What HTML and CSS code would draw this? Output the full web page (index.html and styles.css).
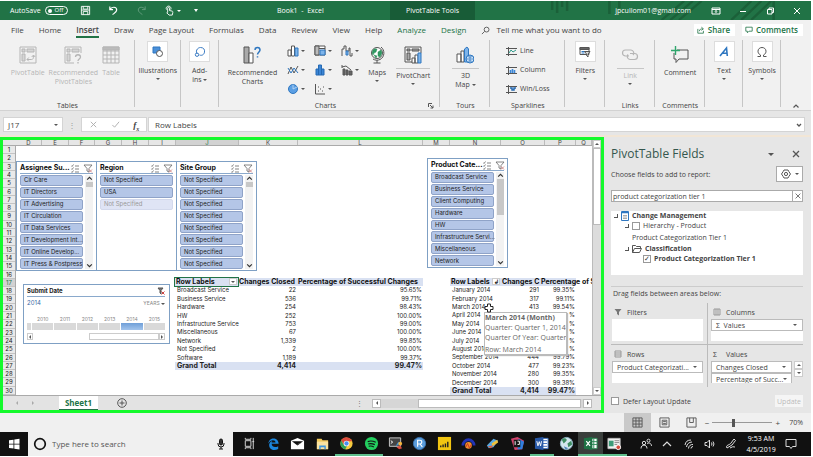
FILE: index.html
```html
<!DOCTYPE html>
<html lang="en">
<head>
<meta charset="utf-8">
<title>Book1 - Excel</title>
<link rel="stylesheet" href="styles.css">
</head>
<body>
<header class="titlebar">
  <div class="quick">
    <label class="autosave" for="autosave">AutoSave</label>
    <button class="toggle" id="autosave"><i></i>Off</button>
    <button class="qa save" aria-label="Save"><svg viewBox="0 0 12 12"><path d="M1.5 1.5h9v9h-9zM3.5 1.5v3h5v-3M3.5 10.500v-3.500h5v3.500M1.500 5.500h9"/></svg></button>
    <button class="qa undo" aria-label="Undo"><svg viewBox="0 0 12 12"><path d="M2 1.500v3.500h3.500M2 5C4 1.500 9.500 1.500 9.500 5.500c0 2-2 3-4.500 5" stroke-width="1.300"/></svg></button>
    <button class="qa redo" aria-label="Redo"><svg viewBox="0 0 12 12"><path d="M10 1.500v3.500h-3.500M10 5C8 1.500 2.500 1.500 2.500 5.500c0 2 2 3 4.500 5"/></svg></button>
    <button class="qa touch" aria-label="Touch mode"><svg viewBox="0 0 12 12"><path d="M4 8V3.500a1 1 0 0 1 2 0V6l3 .7c.7.300.8.800.6 1.500L9 11H5.500L3 8.500zM2.700 5a2.600 2.600 0 1 1 4.600 0"/></svg></button>
    <i class="caret"></i>
    <i class="caret lined"></i>
  </div>
  <div class="doc">Book1&nbsp; -&nbsp; Excel</div>
  <div class="context">PivotTable Tools</div>
  <div class="account">
    <svg class="circuit" viewBox="0 0 270 19" preserveAspectRatio="none"><path d="M62 0v9M66 0v12M70 0v6M74 0v10M108 0v13M116 0v7M150 19l18-19M157 19l18-19M164 19l18-19M206 19l16-19M214 19l16-19M222 19l16-19M240 0v19"/></svg>
    <span class="mail">jpcullom01@gmail.com</span>
    <button class="win" aria-label="Ribbon display"><svg viewBox="0 0 10 10"><path d="M1 2h8v6H1zM1 3.500h8M5 7V4.500M4 5.500l1-1 1 1"/></svg></button>
    <button class="win" aria-label="Minimize"><svg viewBox="0 0 10 10"><path d="M2 5.500h6"/></svg></button>
    <button class="win" aria-label="Restore"><svg viewBox="0 0 10 10"><path d="M2.500 3.500h4.500v4.500H2.500zM4 3.500V2h4.500v4.500H7"/></svg></button>
    <button class="win" aria-label="Close"><svg viewBox="0 0 10 10"><path d="M2 2l6 6M8 2L2 8"/></svg></button>
  </div>
</header>

<nav class="tabs">
  <a href="#">File</a><a href="#">Home</a><a href="#" class="on">Insert</a><a href="#">Draw</a><a href="#">Page Layout</a><a href="#">Formulas</a><a href="#">Data</a><a href="#">Review</a><a href="#">View</a><a href="#">Help</a><a href="#" class="green">Analyze</a><a href="#" class="green">Design</a>
  <a href="#" class="tell"><svg viewBox="0 0 10 10"><path d="M1 9l3-3M3.500 4a2.700 2.700 0 1 1 5.400 0a2.700 2.700 0 0 1-5.400 0"/></svg>Tell me what you want to do</a>
  <span class="share">
    <button><svg viewBox="0 0 10 10"><path d="M1.500 4h-.5v5h7V6M3 6.500C3 4 5 3.500 7 3.500M5.500 1.500l2.500 2-2.500 2"/></svg>Share</button>
    <button><svg viewBox="0 0 10 10"><path d="M1 1.500h8v5H5L3 8.500v-2H1z"/></svg>Comments</button>
  </span>
</nav>

<section class="ribbon">
  <div class="group tables">
    <div class="tools">
      <button class="tool off"><svg class="big" viewBox="0 0 18 18"><path d="M1 1h16v16H1z"/><path d="M3 3h3v3H3zM8 3h7v3H8zM3 8h3v7H3z" fill="#d5d5d5"/><path d="M8 13.500h4.500c1.500 0 2-1 2-4M9.800 11.500L8 13.500l1.800 1.800M12.700 11L14.500 9l1.700 2"/></svg>PivotTable</button>
      <button class="tool off"><svg class="big" viewBox="0 0 18 18"><path d="M10 17H1V1h16v6"/><path d="M3 3h3v3H3zM8 3h7v3H8zM3 8h3v7H3z" fill="#d5d5d5"/><path d="M11.500 11c0-3 5-3 5 0 0 2-2.500 2-2.500 4M14 16v1.500" stroke-width="1.300"/></svg>Recommended<br>PivotTables</button>
      <button class="tool off"><svg class="big" viewBox="0 0 18 18"><path d="M1 1h16v16H1zM1 5h16M1 9h16M1 13h16M5 1v16M9 1v16M13 1v16"/><path d="M1 1h16v3H1z" fill="#bbb"/></svg>Table</button>
    </div>
    <h2>Tables</h2>
  </div>
  <div class="group illus">
    <button class="tool"><span class="tile"><svg viewBox="0 0 12 12"><path d="M1 1h7v6H1z" fill="#4a90d9" stroke="#2f77c0"/><circle cx="7.500" cy="7.500" r="3" fill="#fff"/></svg></span>Illustrations<i class="caret"></i></button>
  </div>
  <div class="group addins">
    <button class="tool"><span class="tile"><svg viewBox="0 0 12 12"><path d="M3.500 8C1 6 3 1.500 6.500 1.500c3 0 4.500 2 4 4.500-.3 2.500-2.500 4-5 3" stroke="#3b7cc4"/><circle cx="3" cy="8.700" r="1.700" stroke="#3b7cc4"/></svg></span>Add-<br><span>ins <i class="caret"></i></span></button>
  </div>
  <div class="group charts">
    <div class="tools">
      <button class="tool rec"><svg class="big" viewBox="0 0 18 18"><path d="M1 1h5v16H1z" fill="#aaa"/><path d="M6 7h4v10H6z" fill="#fff"/><path d="M12 4c0-3.500 5-3.500 5 0 0 2-2.500 2.500-2.500 4.500M14.500 10.200v1.300" stroke="#2f77c0" stroke-width="1.500"/></svg>Recommended<br>Charts</button>
      <div class="kinds">
        <button aria-label="Column chart"><svg viewBox="0 0 12 12"><path d="M1 5h3v6H1z" fill="#fff"/><path d="M4.500 1h3v10h-3z" fill="#fff"/><path d="M8 3h3v8H8z" fill="#7db4ea" stroke="#2f77c0"/></svg><i class="caret"></i></button>
        <button aria-label="Hierarchy chart"><svg viewBox="0 0 12 12"><path d="M1 1h10v9H1zM1 3.500h10" fill="#fff"/><path d="M1 1h4v9H1z" fill="#bbb"/><path d="M6 5h5v5H6z" fill="#7db4ea" stroke="#2f77c0"/></svg><i class="caret"></i></button>
        <button aria-label="Waterfall chart"><svg viewBox="0 0 12 12"><path d="M1 11V4h2V1h2v5h3V3h1v8h2V8" /><path d="M5 6h2v4H5z" fill="#7db4ea" stroke="#2f77c0"/></svg><i class="caret"></i></button>
        <button aria-label="Line chart"><svg viewBox="0 0 12 12"><path d="M1 10l3-7 3 6 4-7"/><path d="M1 4l3 5 3-5 4 5" stroke="#2f77c0"/></svg><i class="caret"></i></button>
        <button aria-label="Statistic chart"><svg viewBox="0 0 12 12"><path d="M2 11V5h2.500V1h3v4H10v6z" fill="#3b86d6" stroke="#2469b3"/><path d="M4.500 11V5M7.500 11V5" stroke="#2469b3"/></svg><i class="caret"></i></button>
        <button aria-label="Combo chart"><svg viewBox="0 0 12 12"><path d="M1 3l4-1 5 4M1 1v3"/><path d="M2 5h2v6H2zM5 6h2v5H5zM8 7h3v4H8z" fill="#666"/></svg><i class="caret"></i></button>
        <button aria-label="Pie chart"><svg viewBox="0 0 12 12"><circle cx="6" cy="6" r="4.500" fill="#5b9fe4" stroke="#2f77c0"/><path d="M6 6V1.500M6 6L10 4" stroke="#cfe4f8" stroke-width=".7"/></svg><i class="caret"></i></button>
        <button aria-label="Scatter chart"><svg viewBox="0 0 12 12"><path d="M1.500 1v10H11"/><path d="M4 8h1M6 6h1M8 8h1M9 4h1M4 4h1"/></svg><i class="caret"></i></button>
      </div>
      <button class="tool maps"><svg class="big" viewBox="0 0 18 18"><circle cx="9" cy="7" r="5.500" fill="#fff"/><path d="M5 4c2-2 3-1 4-1l-1 3-2 1-1 2-1-2zM10 6l3-2 1 3-2 4-2-1zM6 9l3 1-1 2z" fill="#2f9a62" stroke="#2f8a5a" stroke-width=".5"/><path d="M13 1c4 3 4 10-1 12.500-2 1-5 1-7-.5M9 14v3M5.500 17h7"/></svg>Maps<i class="caret"></i></button>
      <button class="tool ruled"><svg class="big" viewBox="0 0 18 18"><path d="M9 16H1V1h16v6"/><path d="M3 3h3v2H3zM8 3h7v2H8zM3 7h3v7H3z" fill="#aaa"/><path d="M8 12h3v5H8zM11 9h3v8h-3z" fill="#fff"/><path d="M14 7h3v10h-3z" fill="#7db4ea" stroke="#2f77c0"/></svg><span>PivotChart</span><i class="caret"></i></button>
    </div>
    <div class="foot"><h2>Charts</h2><svg class="launch" viewBox="0 0 6 6"><path d="M.5 4V.5H4M2 2l3 3M5 2.500V5H2.500"/></svg></div>
  </div>
  <div class="group tours">
    <button class="tool ruled"><svg class="big" viewBox="0 0 18 18"><path d="M1 8h4v8H1zM5 5h3v11H5z" fill="#fff"/><path d="M8.500 3V16h4V3l-1.500-2z" fill="#7db4ea" stroke="#2f77c0"/><circle cx="14" cy="13" r="4" fill="#cfe4f8" stroke="#2f77c0"/><path d="M10 13h8M14 9v8M11.500 10.500q2.500 1.500 5 0M11.500 15.500q2.500-1.500 5 0" stroke="#2f77c0" stroke-width=".7"/></svg><span>3D</span><span>Map <i class="caret"></i></span></button>
    <h2>Tours</h2>
  </div>
  <div class="group sparks">
    <div class="lines">
      <button><svg viewBox="0 0 11 9"><path d="M2.500 0v9M0 1.500h11M0 7.500h11"/><path d="M3 6l2-3 2 2 3-2" stroke="#2f9a8a"/></svg>Line</button>
      <button><svg viewBox="0 0 11 9"><path d="M2.500 0v9M0 1.500h11M0 7.500h11"/><path d="M4.500 7V4M6.500 7V3M8.500 7V4" stroke="#3b86d6" stroke-width="1.600"/></svg>Column</button>
      <button><svg viewBox="0 0 11 9"><path d="M2.500 0v9M0 1.500h11M0 7.500h11"/><path d="M4 3h2v2h2V3h2" stroke="#2469b3" stroke-width="1.500"/></svg>Win/Loss</button>
    </div>
    <h2>Sparklines</h2>
  </div>
  <div class="group filters">
    <button class="tool"><span class="tile"><svg viewBox="0 0 12 12"><path d="M1 1.500h9v7H1z" fill="#fff"/><path d="M1 1.500h9v2H1z" fill="#666"/><path d="M2.500 5.500h4M2.500 7h3" stroke="#2f77c0"/><path d="M5.500 5.500H11L9 8v3L7.500 9.500V8z" fill="#ddd"/></svg></span>Filters<i class="caret"></i></button>
  </div>
  <div class="group links">
    <button class="tool off ruled"><svg class="big" viewBox="0 0 18 18"><path d="M8 10H4.500a3 3 0 0 1 0-6H10a3 3 0 0 1 2 5M9 7.500H13.500a3 3 0 0 1 0 6H9A3 3 0 0 1 7 8.500" stroke-width="1.200"/></svg><span>Link</span><i class="caret"></i></button>
    <h2>Links</h2>
  </div>
  <div class="group comm">
    <button class="tool"><svg class="big" viewBox="0 0 18 18"><path d="M6 4h11v9H8l-3 3.500V13H3V7"/><path d="M4.500 0v9M0 4.500h9" stroke="#2fa76d" stroke-width="1.400"/></svg>Comment</button>
    <h2>Comments</h2>
  </div>
  <div class="group text">
    <button class="tool"><span class="tile"><svg viewBox="0 0 12 12"><path d="M2 10L8.500 2l.8 8M4.500 7.200h4.500" stroke="#2f77c0" stroke-width="1.600"/></svg></span>Text<i class="caret"></i></button>
  </div>
  <div class="group text">
    <button class="tool"><span class="tile"><svg viewBox="0 0 12 12"><path d="M1.500 10.500H4.500V9C2.500 8 2 6.500 2 5.200 2 3 3.800 1.500 6 1.500s4 1.500 4 3.700c0 1.300-.5 2.800-2.500 3.800v1.500h3" /></svg></span>Symbols<i class="caret"></i></button>
  </div>
  <div class="group end"><svg viewBox="0 0 8 8"><path d="M1.500 5.500L4 3l2.500 2.500" stroke-width="1.200"/></svg></div>
</section>

<section class="formula">
  <button class="name">J17<i class="caret"></i></button>
  <span class="dots">⋮</span>
  <div class="fx">
    <svg viewBox="0 0 10 10"><path d="M2 2l6 6M8 2L2 8"/></svg>
    <svg viewBox="0 0 10 10"><path d="M1.500 5.500L4 8l5-6"/></svg>
    <em>f<sub>x</sub></em>
  </div>
  <div class="entry"><input aria-label="Formula" value="Row Labels"><svg viewBox="0 0 8 8"><path d="M2 3l2 2 2-2" stroke-width="1.300"/></svg></div>
</section>

<main class="work">
  <section class="book">
    <div class="sheet">
      <i class="corner"></i>
      <div class="cols"><b>D</b><b>E</b><b>F</b><b>G</b><b>H</b><b>I</b><b class="cur">J</b><b>K</b><b>L</b><b>M</b><b>N</b><b>O</b><b>P</b><b>Q</b></div>
      <div class="rows"><b>1</b><b>2</b><b>3</b><b>4</b><b>5</b><b>6</b><b>7</b><b>8</b><b>9</b><b>10</b><b>11</b><b>12</b><b>13</b><b>14</b><b>15</b><b>16</b><b class="cur">17</b><b>18</b><b>19</b><b>20</b><b>21</b><b>22</b><b>23</b><b>24</b><b>25</b><b>26</b><b>27</b><b>28</b><b>29</b><b>30</b></div>
      <div class="canvas">
        <div class="upper">
          <div class="trio">
            <section class="slicer">
              <h3><span>Assignee Su...</span><svg viewBox="0 0 22 9"><use href="#slicer-tools"/></svg></h3>
              <div class="pick"><div class="items"><button>Cir Care</button><button>IT Directors</button><button>IT Advertising</button><button>IT Circulation</button><button>IT Data Services</button><button>IT Development Int...</button><button>IT Online Develop...</button><button>IT Press &amp; Postpress</button></div><div class="bar"><svg viewBox="0 0 6 6"><path d="M1 4l2-2 2 2"/></svg><i class="short"></i><svg viewBox="0 0 6 6"><path d="M1 2l2 2 2-2"/></svg></div></div>
            </section>
            <section class="slicer">
              <h3><span>Region</span><svg viewBox="0 0 22 9"><use href="#slicer-tools"/></svg></h3>
              <div class="pick"><div class="items"><button>Not Specified</button><button>USA</button><button class="faded">Not Specified</button></div></div>
            </section>
            <section class="slicer">
              <h3><span>Site Group</span><svg viewBox="0 0 22 9"><use href="#slicer-tools"/></svg></h3>
              <div class="pick"><div class="items"><button>Not Specified</button><button>Not Specified</button><button>Not Specified</button><button>Not Specified</button><button>Not Specified</button><button>Not Specified</button><button>Not Specified</button><button>Not Specified</button></div><div class="bar"><svg viewBox="0 0 6 6"><path d="M1 4l2-2 2 2"/></svg><i class="short"></i><svg viewBox="0 0 6 6"><path d="M1 2l2 2 2-2"/></svg></div></div>
            </section>
          </div>
          <section class="slicer product">
            <h3><span>Product Cate...</span><svg viewBox="0 0 22 9"><g id="slicer-tools"><path d="M0 1.500l1 1L2.500.5M0 4.500l1 1 1.500-2M0 7.500l1 1 1.500-2M4 2h4M4 5h4M4 8h4"/><path d="M13 1h8l-3 3.500V8l-2-1V4.500z"/><path d="M18 5.500l3 3M21 5.500l-3 3" stroke="#c77"/></g></svg></h3>
            <div class="pick"><div class="items"><button>Broadcast Service</button><button>Business Service</button><button>Client Computing</button><button>Hardware</button><button>HW</button><button>Infrastructure Servi...</button><button>Miscellaneous</button><button>Network</button></div><div class="bar"><svg viewBox="0 0 6 6"><path d="M1 4l2-2 2 2"/></svg><i class="long"></i><svg viewBox="0 0 6 6"><path d="M1 2l2 2 2-2"/></svg></div></div>
          </section>
        </div>
        <div class="lower">
          <section class="timeline">
            <h3>Submit Date<svg viewBox="0 0 8 8"><path d="M1 1h5L4 3.500V7L3 6V3.500z" fill="#777"/><path d="M4.500 4.500l3 3M7.500 4.500l-3 3" stroke="#c44"/></svg></h3>
            <p><span>2014</span><small>YEARS <i class="caret"></i></small></p>
            <div class="years"><span></span><span>2010</span><span>2011</span><span>2012</span><span>2013</span><span class="sel">2014</span><span>2015</span></div>
            <div class="scroll"><button aria-label="Earlier"><i class="left"></i></button><i class="thumb"></i><button aria-label="Later"><i class="right"></i></button></div>
          </section>
          <table class="pivot one">
            <colgroup><col class="w63"><col class="w59"><col></colgroup>
            <thead><tr><th class="active">Row Labels<button aria-label="Filter rows"><i class="caret"></i></button></th><th>Changes Closed</th><th>Percentage of Successful Changes</th></tr></thead>
            <tbody>
            <tr><td>Broadcast Service</td><td>22</td><td>95.65%</td></tr>
            <tr><td>Business Service</td><td>536</td><td>99.71%</td></tr>
            <tr><td>Hardware</td><td>254</td><td>98.43%</td></tr>
            <tr><td>HW</td><td>252</td><td>100.00%</td></tr>
            <tr><td>Infrastructure Service</td><td>753</td><td>99.00%</td></tr>
            <tr><td>Miscellaneous</td><td>67</td><td>100.00%</td></tr>
            <tr><td>Network</td><td>1,339</td><td>99.85%</td></tr>
            <tr><td>Not Specified</td><td>2</td><td>100.00%</td></tr>
            <tr><td>Software</td><td>1,189</td><td>99.37%</td></tr>
            </tbody>
            <tfoot><tr><td>Grand Total</td><td>4,414</td><td>99.47%</td></tr></tfoot>
          </table>
          <div class="months">
          <table class="pivot two">
            <colgroup><col class="w51"><col class="w39"><col></colgroup>
            <thead><tr><th>Row Labels<button aria-label="Filter months"><i class="sorted">↲</i></button></th><th>Changes C</th><th>Percentage of S</th></tr></thead>
            <tbody>
            <tr><td>January 2014</td><td>291</td><td>99.35%</td></tr>
            <tr><td>February 2014</td><td>317</td><td>99.11%</td></tr>
            <tr><td>March 2014</td><td>413</td><td>99.54%</td></tr>
            <tr><td>April 2014</td><td></td><td>%</td></tr>
            <tr><td>May 2014</td><td></td><td>%</td></tr>
            <tr><td>June 2014</td><td></td><td>%</td></tr>
            <tr><td>July 2014</td><td></td><td>%</td></tr>
            <tr><td>August 2014</td><td></td><td>%</td></tr>
            <tr><td>September 2014</td><td>444</td><td>99.79%</td></tr>
            <tr><td>October 2014</td><td>477</td><td>99.23%</td></tr>
            <tr><td>November 2014</td><td>280</td><td>99.35%</td></tr>
            <tr><td>December 2014</td><td>300</td><td>99.38%</td></tr>
            </tbody>
            <tfoot><tr><td>Grand Total</td><td>4,414</td><td>99.47%</td></tr></tfoot>
          </table>
          <div class="tip"><b>March 2014 (Month)</b><span>Quarter: Quarter 1, 2014</span><span>Quarter Of Year: Quarter 1</span><span class="last">Row: March 2014</span></div>
          <svg class="cross" viewBox="0 0 10 10"><path d="M3.500 1h3v2.500H9v3H6.500V9h-3V6.500H1v-3h2.500z" fill="#fff" stroke="#222"/></svg>
          </div>
        </div>
      </div>
      <div class="vbar"><i class="cell"><i class="up"></i></i><i class="thumb"></i><i class="cell low"><i class="down"></i></i></div>
    </div>
    <div class="sheets">
      <span class="arrows"><i class="left"></i><i class="right"></i></span>
      <button class="tab">Sheet1</button>
      <button class="add" aria-label="New sheet"><svg viewBox="0 0 10 10"><circle cx="5" cy="5" r="4.300"/><path d="M5 2.500v5M2.500 5h5"/></svg></button>
      <span class="dots">⋮</span>
      <div class="hbar"><button aria-label="Scroll left"><i class="left"></i></button><i class="thumb"></i><button aria-label="Scroll right"><i class="right"></i></button></div>
    </div>
  </section>

  <aside class="pane">
    <div class="head"><h1>PivotTable Fields</h1><i class="caret"></i><svg viewBox="0 0 10 10"><path d="M2 2l6 6M8 2L2 8" stroke-width="1.300"/></svg></div>
    <div class="choose"><span>Choose fields to add to report:</span><button aria-label="Tools"><svg viewBox="0 0 10 10"><path d="M3 1h4l.8 1.500L9.500 5 7.800 7.500 7 9H3l-.8-1.500L.5 5l1.700-2.500z"/><circle cx="5" cy="5" r="1.600"/></svg><i class="caret"></i></button></div>
    <div class="find"><input aria-label="Search fields" value="product categorization tier 1"><button aria-label="Clear"><svg viewBox="0 0 10 10"><path d="M2 2l6 6M8 2L2 8"/></svg></button></div>
    <div class="tree">
      <div class="l0 strong"><i class="fold"></i><svg viewBox="0 0 8 10"><path d="M.5.5h7v9h-7z" fill="#fff" stroke="#2f77c0"/><path d="M1 1.500h6" stroke="#2f77c0" stroke-width="1.500"/><path d="M2 4.500h4M2 6h4M2 7.500h4" stroke="#888" stroke-width=".7"/></svg>Change Management</div>
      <div class="l1"><i class="fold"></i><input type="checkbox" id="hier"><label for="hier">Hierarchy - Product</label></div>
      <div class="l2">Product Categorization Tier 1</div>
      <div class="l1 strong"><i class="fold"></i><svg class="folder" viewBox="0 0 10 8"><path d="M.5 7.500v-7h3l1 1h4v2M.5 7.500l2-4h7l-2 4z" fill="#fff"/></svg>Classification</div>
      <div class="l3 strong"><input type="checkbox" id="tier" checked><label for="tier">Product Categorization Tier 1</label></div>
    </div>
    <p class="drag">Drag fields between areas below:</p>
    <div class="areas">
      <section><h4><svg viewBox="0 0 8 8"><path d="M.5 1h7L5 4v3.500L3 6V4z" fill="#777" stroke="none"/></svg>Filters</h4><div class="drop"></div></section>
      <section><h4><svg viewBox="0 0 8 8"><path d="M1 1h6v6H1zM3 1v6M5 1v6" stroke="#999"/></svg>Columns</h4><div class="drop"><button><span>Σ&nbsp; Values</span><i class="caret"></i></button></div></section>
      <section><h4><svg viewBox="0 0 8 8"><path d="M1 1h6v6H1zM1 3h6M1 5h6" stroke="#999"/></svg>Rows</h4><div class="drop"><button><span>Product Categorizati...</span><i class="caret"></i></button></div></section>
      <section><h4><b>Σ</b>Values</h4><div class="vals"><div class="drop"><button><span>Changes Closed</span><i class="caret"></i></button><button><span>Percentage of Succ...</span><i class="caret"></i></button></div><div class="step"><i class="cell"><i class="up"></i></i><i class="cell"><i class="down"></i></i></div></div></section>
    </div>
    <div class="defer"><input type="checkbox" id="defer"><label for="defer">Defer Layout Update</label><button>Update</button></div>
  </aside>
</main>

<footer class="status">
  <button class="view on" aria-label="Normal"><svg viewBox="0 0 12 12"><path d="M1 1h10v10H1zM1 4.300h10M1 7.700h10M4.300 1v10M7.700 1v10"/></svg></button>
  <button class="view" aria-label="Page layout"><svg viewBox="0 0 12 12"><path d="M1 1h10v10H1zM3.500 3.500h5v5h-5zM4.500 5h3M4.500 7h3"/></svg></button>
  <button class="view" aria-label="Page breaks"><svg viewBox="0 0 12 12"><path d="M1 1h10v10H1zM4 1v5M8 1v5M4 6h4"/></svg></button>
  <span>−</span><input type="range" aria-label="Zoom" min="0" max="100" value="34"><span>+</span><span class="pct">70%</span>
</footer>

<footer class="taskbar">
  <button class="start" aria-label="Start"><svg viewBox="0 0 12 12"><path d="M1 2.300L5.500 1.700V5.700H1zM6.300 1.600L11.500.8V5.700H6.300zM1 6.500h4.500v4L1 9.900zM6.300 6.500h5.200v5L6.300 10.700z" fill="#fff" stroke="none"/></svg></button>
  <div class="cortana"><svg viewBox="0 0 14 14"><circle cx="7" cy="7" r="5.300" stroke-width="1.700"/></svg><input aria-label="Search" placeholder="Type here to search"><svg class="mic" viewBox="0 0 8 12"><rect x="2.500" y="1" width="3" height="6" rx="1.500" fill="#333"/><path d="M1 5v1a3 3 0 0 0 6 0V5M4 9v2M2 11h4"/></svg></div>
  <div class="apps">
    <a href="#" aria-label="Task view"><svg viewBox="0 0 16 16"><path d="M3.500 5h6v6h-6zM3.500 2v1.500h6V2M3.500 14v-1.500h6V14M12 2v12M11 6h2" stroke="#ddd"/></svg></a>
    <a href="#" aria-label="Edge"><svg viewBox="0 0 16 16"><path d="M2.500 8C3 1 13 .5 13.500 8.300H6c.2 4 4.500 4.200 7 2.500v3C8 16.500 2.500 14 3.500 8.500 4 6.500 6 5.500 6.800 5.300 6.200 6 6 6.500 6 6.800h4.200C10 4 5 3.500 2.500 8z" fill="#1b86dd" stroke="none"/></svg></a>
    <a href="#" aria-label="Mail"><svg viewBox="0 0 16 16"><path d="M1 5l7-3 7 3v9H1z" fill="#fff" stroke="none"/><path d="M2 5.500h12L8 10z" fill="#111" stroke="none"/><path d="M8 9l3-1.500"/></svg></a>
    <a href="#" aria-label="Files"><svg viewBox="0 0 16 16"><path d="M2 3h5l1 1.500h6V14H2z" fill="#f3c95b" stroke="none"/><path d="M2 6h12v8H2z" fill="#fbe3a0" stroke="none"/><path d="M4.500 14v-4h7v4H10v-2H6v2z" fill="#3f96dd" stroke="none"/></svg></a>
    <a href="#" class="run" aria-label="Chrome"><svg viewBox="0 0 16 16"><g stroke="none"><circle cx="8" cy="8" r="6.500" fill="#f7ca3e"/><path d="M2.300 4.800A6.500 6.500 0 0 1 14 5.500H8L5 9z" fill="#dd4b3e"/><path d="M2.300 4.800L5.500 10l3 1-2 3.300A6.500 6.500 0 0 1 2.300 4.800z" fill="#2da05a"/><circle cx="8" cy="8" r="3" fill="#fff"/><circle cx="8" cy="8" r="2.300" fill="#4a8df0"/></g></svg></a>
    <a href="#" class="run" aria-label="Spotify"><svg viewBox="0 0 16 16"><circle cx="8" cy="8" r="7" fill="#23cf5f" stroke="none"/><path d="M4 6q4-1.500 8.500.7M4.500 8.500q3.500-1 7 .7M5 11q3-.8 5.500.7" stroke="#111" stroke-width="1.200"/></svg></a>
    <a href="#" aria-label="Terminal"><svg viewBox="0 0 16 16"><path d="M1.500 2h12v9h-12z" fill="#444" stroke="#ccc"/><path d="M3 5l2 1.500L3 8" stroke="#fff"/><path d="M8 11l3-5 2 2z" fill="#3f96dd" stroke="none"/><circle cx="13" cy="8" r="2" fill="#f3b33b" stroke="none"/><path d="M9 12l4-2 2 3-3 1z" fill="#dd4b3e" stroke="none"/></svg></a>
    <a href="#" aria-label="RStudio"><svg viewBox="0 0 16 16"><circle cx="8" cy="8" r="6.500" fill="#5b9ddb" stroke="#3a74b4"/><path d="M6 11.500v-7h2.500a2 2 0 0 1 0 4H6M8.500 8.500l2.500 3" stroke="#fff" stroke-width="1.200"/></svg></a>
    <a href="#" aria-label="Power BI"><svg viewBox="0 0 16 16"><path d="M1 1h14v14H1z" fill="#f2c511" stroke="none"/><path d="M4 12v-2M6.500 12V9M9 12V8M11.500 12V6" stroke="#222" stroke-width="1.500"/></svg></a>
    <a href="#" aria-label="Audio"><svg viewBox="0 0 16 16"><path d="M2 10a6 6 0 1 1 12 0" stroke="#2233b5" stroke-width="3"/><circle cx="8" cy="10" r="3.500" fill="#f0922b" stroke="none"/><path d="M5 12l2-4 2 5 2-4" stroke="#ce3327"/></svg></a>
    <a href="#" aria-label="Paint"><svg viewBox="0 0 16 16"><path d="M2 10L9 3l5 2-5 7-5 1z" fill="#5aa8df" stroke="none"/><path d="M7 8l6-4 1 3-6 4z" fill="#f0c23b" stroke="none"/><path d="M3 11l6-1-3 3z" fill="#e05b3c" stroke="none"/></svg></a>
    <a href="#" aria-label="IntelliJ"><svg viewBox="0 0 16 16"><path d="M1 3l7-2 7 4-2 9-8 1z" fill="#d2436c" stroke="none"/><path d="M9 3l6 3-2 8H8z" fill="#2f7fe0" stroke="none"/><path d="M4 4h7v8H4z" fill="#151515" stroke="none"/><path d="M5.500 5.500v4M8 5.500h2v3.500H8" stroke="#fff"/></svg></a>
    <a href="#" class="run" aria-label="Word"><svg viewBox="0 0 16 16"><path d="M7 2.500h8v11H7z" fill="#fff" stroke="#3b6fc0"/><path d="M9 5h5M9 8h5M9 11h5" stroke="#3b6fc0"/><path d="M1 2.500L10 1v14l-9-1.500z" fill="#2858a6" stroke="none"/><path d="M3 5.500l1.200 5L5.600 6 7 10.500l1-5" stroke="#fff"/></svg></a>
    <a href="#" aria-label="Globe"><svg viewBox="0 0 16 16"><circle cx="8" cy="8" r="6.500" fill="#d3e6ef" stroke="#8fb9c9"/><path d="M3 4c3-3 6-1 5 1L5 8zM9 8l4-3 1 4-4 3z" fill="#3d8d63" stroke="none"/><path d="M5 11l5 2-3 1z" fill="#4a7fb9" stroke="none"/></svg></a>
    <a href="#" class="run focus" aria-label="Excel"><svg viewBox="0 0 16 16"><path d="M8 2.500h7v11H8z" fill="#fff" stroke="#2b8a55"/><path d="M11.500 3v10M9 6h6M9 9h6" stroke="#2b8a55"/><path d="M1 2.500L10 1v14l-9-1.500z" fill="#1f7245" stroke="none"/><path d="M3.500 5.500l4 5M7.500 5.500l-4 5" stroke="#fff" stroke-width="1.300"/></svg></a>
    <a href="#" class="run" aria-label="Recorder"><svg viewBox="0 0 16 16"><path d="M1 2.500h13v11H1z" fill="#f2f2f2" stroke="#bbb"/><path d="M2 5h5v6H2z" fill="#3c9b78" stroke="none"/><path d="M8 5h5M8 7h5M8 9h3" stroke="#888"/><circle cx="12" cy="12" r="2.500" fill="#d64b3c" stroke="#fff"/></svg></a>
  </div>
  <div class="tray">
    <svg viewBox="0 0 12 12"><circle cx="4" cy="5" r="1.700"/><path d="M1 10.500c0-4.500 6-4.500 6 0"/><circle cx="8.500" cy="2.700" r="1.500"/><path d="M7 6c2-2 4.500-.5 4.500 2"/></svg>
    <svg viewBox="0 0 12 12"><path d="M2 8l4-4 4 4" stroke-width="1.200"/></svg>
    <svg viewBox="0 0 12 12"><path d="M2 7a6 6 0 0 1 6-5M3.500 9A5.500 5.500 0 0 1 9 4M5.500 10.500A4 4 0 0 1 10 6.500M8 10.500a2 2 0 0 1 2-2"/></svg>
    <svg viewBox="0 0 12 12"><path d="M1 4.500h2L5.500 2v8L3 7.500H1zM7.500 4.500q1 1.500 0 3M9 3.500q2 2.500 0 5"/></svg>
    <svg viewBox="0 0 12 12"><path d="M2 10c-2-3 3-3 4-5l3-4 1.500 1.500L7 7zM5 10q3-2 5-1"/></svg>
    <time><span>9:53 AM</span><span>4/5/2019</span></time>
    <svg viewBox="0 0 12 12"><path d="M1 1.500h10v7H7.500L6 10.500 4.500 8.500H1z"/></svg>
  </div>
</footer>
</body>
</html>
```
FILE: styles.css
```css
:root {
  --ui: "Open Sans", "Noto Sans", sans-serif;
  --cell: Inter, "Liberation Sans", sans-serif;
  --green: #217346;
  --line: #c6c6c6;
}
* { box-sizing: border-box; }
body {
  margin: 0;
  padding: 1px 2px 1px 0;
  min-height: 100vh;
  display: flex;
  flex-direction: column;
  font: 7px/9px var(--ui);
  color: #444;
  background: #fff;
}
button, input { font: inherit; color: inherit; border: 0; padding: 0; margin: 0; background: none; }
button { white-space: nowrap; }
a { color: inherit; text-decoration: none; }
h1, h2, h3, h4, p { margin: 0; font: inherit; }
i { font-style: normal; }
svg { display: block; fill: none; stroke: #555; stroke-width: 1; flex: none; }
input[type="checkbox"] { appearance: none; width: 8px; height: 8px; border: 1px solid #999; background: #fff; flex: none; display: grid; place-items: center; }
input[type="checkbox"]:checked::before { content: "✓"; font: 7px/6px "DejaVu Sans", sans-serif; color: #333; }
.caret, .up, .down, .left, .right { display: inline-block; border: 2px solid transparent; flex: none; }
.caret, .down { border-top-color: #555; border-bottom: 0; vertical-align: middle; }
.up { border-bottom-color: #555; border-top: 0; }
.left { border-right-color: #555; border-left: 0; }
.right { border-left-color: #555; border-right: 0; }

.titlebar { display: flex; height: 19px; align-items: center; background: var(--green); color: #fff; }
.quick { display: flex; align-items: center; width: 277px; padding-left: 10px; }
.quick svg { width: 11px; height: 11px; stroke: #fff; }
.quick .caret { border-top-color: #fff; }
.toggle { display: flex; align-items: center; gap: 3px; margin: 0 12px 0 4px; width: 23px; height: 9px; border: 1px solid #fff; border-radius: 5px; font-size: 6px; line-height: 7px; padding-left: 2px; }
.toggle i { width: 4px; height: 4px; border-radius: 50%; background: #fff; }
.qa { margin-right: 17px; }
.quick .touch { margin-right: 2px; }
.redo { opacity: .3; }
.quick .lined { margin-left: 13px; border-top-width: 3px; }
.doc { width: 113px; }
.context { width: 85px; align-self: stretch; display: flex; align-items: center; justify-content: center; background: #185c37; }
.account { flex: 1; align-self: stretch; display: flex; align-items: center; justify-content: flex-end; position: relative; padding-right: 1px; }
.circuit { position: absolute; inset: 0; width: 100%; height: 100%; stroke: #1b6039; stroke-width: 2; }
.account > :not(.circuit) { position: relative; }
.mail { margin-right: 11px; }
.win { width: 27px; display: grid; place-items: center; }
.win svg { width: 10px; height: 10px; stroke: #fff; }

.tabs { display: flex; align-items: center; gap: 15px; height: 20px; padding: 0 8px 0 11px; background: #f1f1f1; font-size: 8px; line-height: 12px; }
.tabs > a { border-bottom: 2px solid transparent; padding-top: 2px; white-space: nowrap; }
.tabs .on { border-color: var(--green); font-weight: 600; }
.tabs .green { color: var(--green); }
.tabs .tell { display: flex; align-items: center; gap: 6px; }
.tabs svg { width: 9px; height: 9px; }
.share { margin-left: auto; display: flex; gap: 7px; color: var(--green); font-weight: 600; }
.share button { display: flex; gap: 3px; align-items: center; background: #fff; height: 12px; padding: 0 5px 0 3px; }
.share svg { stroke: var(--green); width: 8px; height: 8px; }

.ribbon { display: flex; height: 71px; background: #f1f1f1; border-bottom: 1px solid #d2d2d2; }
.group { display: flex; flex-direction: column; align-items: center; padding-top: 6px; position: relative; flex: 38 38 0; min-width: 0; }
.group::after { content: ""; position: absolute; right: 0; top: 0; bottom: 3px; border-right: 1px solid var(--line); }
.group h2 { margin-top: auto; text-align: center; }
.tables { flex-grow: 135; }
.illus { flex-grow: 46; }
.charts { flex-grow: 222; align-items: stretch; }
.tours, .links, .comm { flex-grow: 50; }
.sparks { flex-grow: 75; }
.filters { flex-grow: 40; }
.end { flex-grow: 30; justify-content: flex-end; }
.end::after { display: none; }
.end svg { width: 8px; height: 8px; }
.tools { display: flex; justify-content: center; align-items: flex-start; gap: 4px; }
.tables .tools { padding-right: 4px; }
.tool { display: flex; flex-direction: column; align-items: center; text-align: center; line-height: 9px; }
.tool > .caret { margin-top: 3px; }
.tool .big { width: 18px; height: 18px; margin-bottom: 4px; }
.tile { width: 21px; height: 21px; background: #fff; border: 1px solid #ddd; display: grid; place-items: center; margin-bottom: 4px; margin-top: -5px; }
.tile svg { width: 12px; height: 12px; }
.off { color: #b5b5b5; }
.off svg { stroke: #b5b5b5; }
.ruled .big + span { border-top: 1px solid var(--line); padding-top: 2px; min-width: 27px; }
.charts .tools { justify-content: flex-start; padding-left: 9px; gap: 10px; }
.kinds { display: grid; grid-template-columns: repeat(3, 27px); grid-auto-rows: 19px; margin-top: -5px; }
.kinds button { display: flex; align-items: center; gap: 2px; }
.kinds svg { width: 12px; height: 12px; }
.maps { margin-left: -10px; }
.foot { margin-top: auto; display: flex; align-items: center; padding: 0 6px 0 96px; }
.launch { width: 6px; height: 6px; margin-left: auto; }
.lines { display: flex; flex-direction: column; gap: 9px; }
.lines button { display: flex; align-items: center; gap: 3px; line-height: 10px; }
.lines svg { width: 11px; height: 9px; }

.formula { display: flex; height: 26px; padding: 6px 6px 3px 3px; background: #e6e6e6; border-bottom: 2px solid #f2e6d6; font-size: 8px; line-height: 10px; }
.formula > * { background: #fff; }
.name { display: flex; align-items: center; justify-content: space-between; width: 60px; padding: 0 4px; border: 1px solid #d4d4d4; }
.formula .dots { background: none; width: 18px; text-align: center; color: #999; line-height: 15px; }
.fx { display: flex; align-items: center; justify-content: space-around; width: 66px; border: 1px solid #d4d4d4; }
.fx svg { width: 9px; height: 9px; stroke: #aaa; }
.fx em { font: italic 700 9px/10px "Liberation Serif", serif; }
.fx sub { font-size: 6px; line-height: 0; }
.entry { flex: 1; display: flex; align-items: center; border: 1px solid #d4d4d4; margin-left: 1px; padding: 0 1px 0 6px; }
.entry input { flex: 1; min-width: 0; }
.entry svg { width: 8px; height: 8px; }

.work { flex: 1; display: grid; grid-template-columns: minmax(0, 604fr) minmax(0, 207fr); background: #e6e6e6; }
.book { display: flex; flex-direction: column; border: 3px solid #14fa2c; }
.sheet { flex: 1; display: grid; grid-template: 6px 1fr / 13px minmax(0, 1fr) 9px; overflow: hidden; background: #fff; font: 6px/8px var(--cell); color: #222; }
.cols, .corner { overflow: hidden; background: #e6e6e6; border-bottom: 1px solid #aaa; }
.cols { display: grid; grid-template-columns: 26px 27px 26px 27px 27px 27px 63px 59px 125px 27px 51px 44px 31px 1fr; align-items: end; line-height: 6px; color: #444; }
.cols b, .rows b { font-weight: 400; text-align: center; }
.cols b { border-right: 1px solid #bbb; }
.cols .cur, .rows .cur { background: #d2d2d2; color: var(--green); }
.rows { grid-row: 2; display: grid; grid-auto-rows: 1fr; background: #e9e9e9; border-right: 1px solid #aaa; line-height: 7px; }
.rows b { border-bottom: 1px solid #c4c4c4; }
.canvas { grid-row: 2; overflow: hidden; min-width: 0; }
.vbar { grid-column: 3; grid-row: 1 / 3; background: #dcdcdc; border-left: 1px solid #bbb; display: flex; flex-direction: column; }
.cell { display: grid; place-items: center; height: 8px; background: #fff; border: 1px solid #ccc; }
.vbar .thumb { height: 77px; background: #fff; border: 1px solid #bbb; }
.vbar .low { margin-top: auto; }

.upper { display: flex; align-items: flex-start; height: 132px; padding-top: 12px; }
.trio { display: flex; margin: 3px 170px 0 0; }
.slicer { width: 81px; height: 110px; padding: 1px 3px; border: 1px solid #7fa0c4; background: #fff; display: flex; flex-direction: column; flex: none; }
.trio .slicer + .slicer { margin-left: -1px; }
.slicer h3 { display: flex; align-items: center; justify-content: space-between; font-weight: 700; font-size: 7px; height: 11px; border-bottom: 1px solid #8aa9cc; color: #111; white-space: nowrap; }
.slicer h3 svg { width: 22px; height: 9px; stroke: #666; stroke-width: .8; }
.pick { flex: 1; display: flex; gap: 2px; padding-top: 1px; }
.items { flex: 1; min-width: 0; display: grid; grid-template: repeat(8, 1fr) / minmax(0, 1fr); gap: 1px; }
.items button { text-align: left; padding: 0 3px; background: #b4c6e7; border: 1px solid #8fa3c8; border-radius: 2px; }
.items .faded { background: #dfe4f5; border-color: #d3d9ec; color: #999; }
.bar { width: 8px; display: flex; flex-direction: column; align-items: center; background: #f2f2f2; }
.bar svg { width: 7px; height: 7px; stroke: #333; }
.bar svg:last-child { margin-top: auto; }
.bar i { width: 7px; background: #c8c8c8; }
.short { height: 5px; }
.long { height: 36px; }

.lower { display: flex; align-items: flex-start; }
.timeline { width: 147px; margin: 6px 5px 0 7px; height: 60px; padding: 2px 4px 2px 3px; border: 1px solid #7fa0c4; background: #fff; flex: none; }
.timeline h3 { display: flex; justify-content: space-between; font-weight: 700; color: #222; padding-bottom: 1px; border-bottom: 1px solid #8aa9cc; }
.timeline h3 svg { width: 8px; height: 8px; }
.timeline p { display: flex; justify-content: space-between; padding-top: 2px; color: #3b6ba5; }
.timeline small { font-size: 5px; color: #888; }
.years { display: grid; grid-template-columns: 4px repeat(6, 1fr); gap: 1px; margin-top: 9px; font-size: 5px; line-height: 7px; text-align: center; color: #888; }
.years span { display: flex; flex-direction: column; justify-content: flex-end; }
.years span::after { content: ""; height: 7px; background: #d9d9d9; }
.years .sel::after { background: linear-gradient(#6f9fd8, #a3c4ec); }
.scroll { display: flex; align-items: stretch; height: 7px; margin-top: 3px; }
.scroll button { width: 6px; border: 1px solid #ccc; display: grid; place-items: center; }
.scroll .thumb { flex: 1; margin-left: 56px; border: 1px solid #ccc; }

.pivot { border-collapse: collapse; table-layout: fixed; flex: none; color: #222; white-space: nowrap; line-height: 8px; }
.pivot td, .pivot th { padding: 0 1px; text-align: right; height: 8px; }
.pivot th { text-align: left; color: #111; }
.pivot td:first-child { text-align: left; padding-left: 2px; }
.pivot thead, .pivot tfoot { background: #d9e1f2; font-size: 7px; font-weight: 700; }
.pivot th button { float: right; width: 8px; height: 7px; background: #fff; border: 1px solid #ccc; display: grid; place-items: center; }
.pivot .active { outline: 1px solid var(--green); }
.sorted { font-size: 6px; line-height: 6px; }
.w63 { width: 63px; }
.w59 { width: 59px; }
.w51 { width: 51px; }
.w39 { width: 39px; }
.one { width: 248px; height: 92px; margin-right: 27px; }
.two { width: 126px; height: 117px; }
.months { position: relative; flex: none; }
.tip { position: absolute; left: 34px; top: 34px; width: 83px; height: 43px; overflow: hidden; background: #fff; border: 1px solid #bbb; box-shadow: 1px 1px 1px #bbb; font: 7px/10px var(--ui); color: #666; display: flex; flex-direction: column; white-space: nowrap; }
.tip .last { margin-top: 2px; }
.cross { position: absolute; left: 34px; top: 25px; width: 10px; height: 10px; }

.sheets { display: flex; align-items: center; height: 15px; background: #e3e3e3; border-top: 1px solid #aaa; }
.arrows { display: flex; gap: 14px; width: 56px; padding-left: 13px; opacity: .4; }
.tab { width: 39px; align-self: stretch; background: #fff; color: var(--green); font-weight: 700; font-size: 8px; border-bottom: 1px solid var(--green); }
.add { margin-left: 19px; }
.add svg { width: 10px; height: 10px; }
.sheets .dots { margin-left: auto; padding-right: 9px; color: #777; }
.hbar { display: flex; width: 220px; margin-right: 9px; height: 9px; background: #d6d6d6; }
.hbar button { width: 9px; background: #fff; border: 1px solid #bbb; display: grid; place-items: center; }
.hbar .thumb { flex: 1; margin: 0 2px 0 37px; background: #fff; border: 1px solid #bbb; }

.pane { min-width: 0; padding: 9px 8px 0 7px; display: flex; flex-direction: column; }
.head { display: flex; align-items: center; }
.head h1 { flex: 1; font-size: 12px; line-height: 16px; color: #35564d; white-space: nowrap; }
.head .caret { border-width: 3px 3px 0; margin-right: 17px; }
.head svg { width: 10px; height: 10px; margin-right: 2px; }
.choose { display: flex; align-items: center; justify-content: space-between; height: 18px; margin-top: 3px; }
.choose button { display: flex; align-items: center; justify-content: center; gap: 4px; width: 27px; height: 16px; background: #fff; border: 1px solid #aaa; }
.choose svg { width: 10px; height: 10px; }
.find { display: flex; margin-top: 7px; height: 12px; background: #fff; border: 1px solid #aaa; }
.find input { flex: 1; min-width: 0; padding-left: 1px; }
.find button { width: 10px; border-left: 1px solid #aaa; display: grid; place-items: center; }
.find svg { width: 8px; height: 8px; }
.tree { margin-top: 9px; height: 64px; background: #fff; line-height: 10px; }
.tree > div { display: flex; align-items: center; gap: 3px; height: 10px; }
.tree svg { width: 8px; height: 10px; }
.tree .folder { width: 10px; height: 8px; }
.strong { font-weight: 700; }
.fold { width: 4px; height: 4px; border: solid #555; border-width: 0 1px 1px 0; }
.tree .l0 { padding-left: 3px; }
.tree .l1 { padding-left: 14px; }
.tree .l2 { padding-left: 21px; height: 13px; }
.tree .l3 { padding-left: 32px; }
.drag { border-top: 1px solid #ccc; margin-top: 11px; padding: 2px 2px 0; }
.areas { display: grid; grid-template-columns: 1fr 1fr; margin-top: 5px; }
.areas section { height: 42px; padding: 4px 0 0 3px; border-left: 1px solid #bbb; min-width: 0; }
.areas section:nth-child(odd) { padding: 4px 4px 0 1px; border-left: 0; }
.areas section:nth-child(-n+2) { border-bottom: 1px solid #bbb; }
.areas h4 { display: flex; align-items: center; gap: 5px; height: 10px; padding-left: 2px; }
.areas h4 svg { width: 8px; height: 8px; }
.areas h4 b { width: 8px; font-weight: 400; }
.drop { height: 22px; margin-top: 2px; background: #fff; overflow: hidden; flex: 1; min-width: 0; }
.drop button { display: flex; width: 100%; align-items: center; justify-content: space-between; height: 12px; padding: 0 5px 0 4px; border: 1px solid #bbb; }
.vals { display: flex; gap: 2px; }
.step { width: 9px; padding-top: 2px; }
.defer { display: flex; align-items: center; gap: 4px; margin-top: 8px; }
.defer button { margin-left: auto; height: 12px; width: 28px; background: #f5f5f5; color: #bbb; }

.status { display: flex; align-items: stretch; justify-content: flex-end; height: 19px; padding-right: 8px; background: #f0f0f0; line-height: 19px; }
.view { width: 27px; display: grid; place-items: center; }
.view.on { background: #c9c9c9; }
.view svg { width: 11px; height: 11px; }
.status input { appearance: none; width: 60px; margin: 0 3px; background: linear-gradient(#999, #999) center / 100% 1px no-repeat; }
.status input::-webkit-slider-thumb { appearance: none; width: 3px; height: 8px; background: #555; }
.status > span { font-size: 8px; }
.status .pct { width: 23px; text-align: right; font-size: 7px; }

.taskbar { display: flex; height: 24px; background: #111; color: #fff; }
.start { width: 28px; display: grid; place-items: center; }
.start svg { width: 12px; height: 12px; }
.cortana { width: 205px; display: flex; align-items: center; padding: 0 8px 0 5px; background: #f0f0f0; color: #555; }
.cortana svg { width: 14px; height: 14px; stroke: #111; }
.cortana input { flex: 1; min-width: 0; margin-left: 5px; font-size: 8px; line-height: 12px; }
.cortana input::placeholder { color: #555; opacity: 1; }
.cortana .mic { width: 8px; height: 12px; }
.apps { flex: 1; display: flex; padding-left: 4px; }
.apps a { flex: 1; display: grid; place-items: center; border-bottom: 2px solid transparent; }
.apps .run { border-color: #5fbf8c; }
.apps .focus { background: #3a3f3c; }
.apps svg { width: 15px; height: 15px; }
.tray { display: flex; align-items: center; width: 184px; justify-content: space-between; padding: 0 14px 0 13px; }
.tray svg { width: 12px; height: 12px; stroke: #ddd; }
.tray time { display: flex; flex-direction: column; align-items: center; line-height: 11px; }
```
